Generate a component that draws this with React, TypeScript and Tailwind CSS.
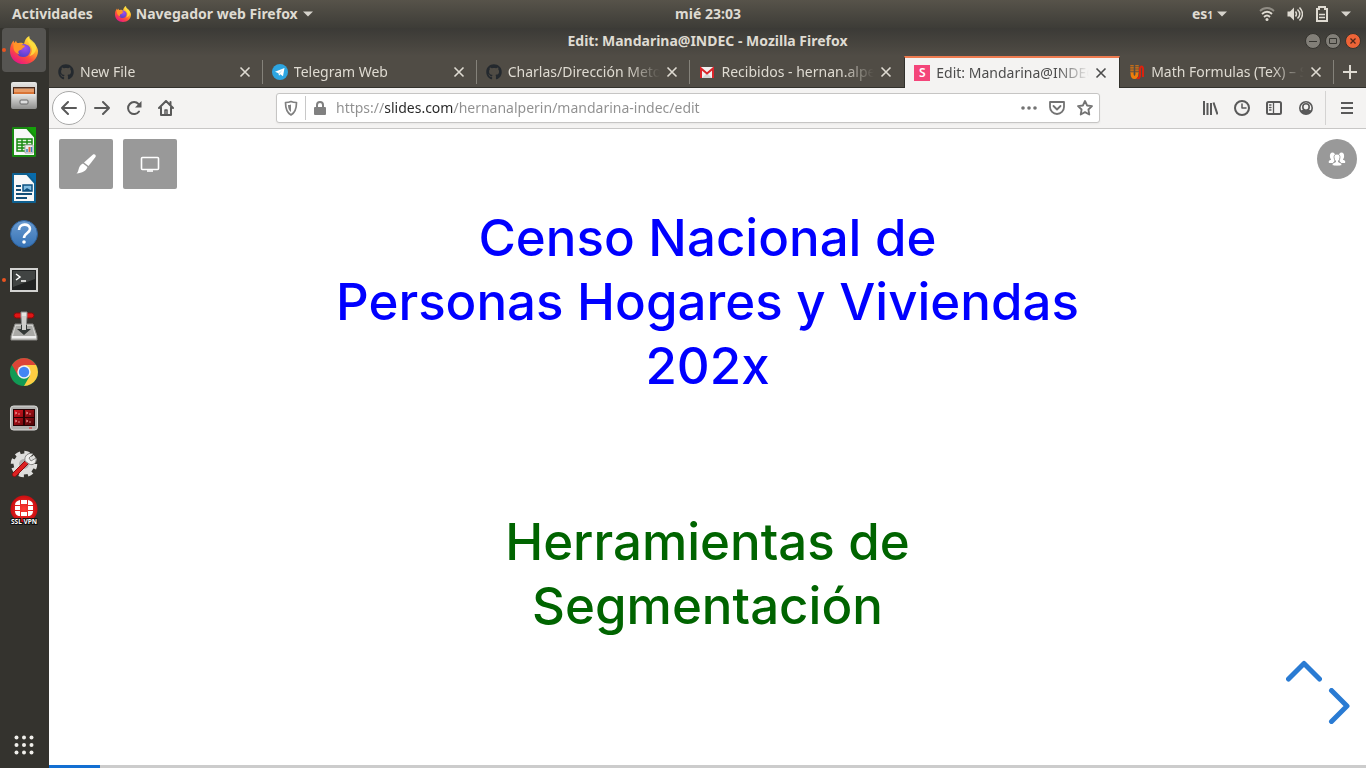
import type { ReactNode } from "react";
import { FaGithub } from "react-icons/fa";

function FirefoxIcon({ className }: { className: string }) {
  return (
    <svg viewBox="0 0 32 32" className={className} aria-hidden="true">
      <defs>
        <linearGradient id="fx-body" x1="0.85" y1="0.05" x2="0.25" y2="1">
          <stop offset="0" stopColor="#fff44f" />
          <stop offset="0.35" stopColor="#ffb028" />
          <stop offset="0.65" stopColor="#ff4f3a" />
          <stop offset="1" stopColor="#e3118d" />
        </linearGradient>
        <radialGradient id="fx-globe" cx="0.6" cy="0.3" r="0.8">
          <stop offset="0" stopColor="#a04df0" />
          <stop offset="1" stopColor="#4a3fc4" />
        </radialGradient>
      </defs>
      <path d="M0 17C0 12 1 9 4 5l1 3 2-3c0 2 1 3 3 3 3-1 5 0 6 1 1-4 2-7 6-9 0 4 2 6 5 8 3 3 5 6 5 9 0 9-7 15-16 15S0 26 0 17Z" fill="url(#fx-body)" />
      <path d="M10 13c2-3 6-5 9-3 4 1 5 5 4 8-1 4-4 6-8 6-5 0-8-4-7-8l7-1Z" fill="url(#fx-globe)" />
      <path d="M4 8c3 0 7 0 9 2 2 1 4 0 4 2l-5 4c-3 1-3 3-1 5-4-1-7-4-7-8Z" fill="#ff9528" />
      <path d="M21 2c-2 5 2 7 3 10 2 4 1 8-2 11 6-2 8-6 8-10 0-5-5-8-9-11Z" fill="#ffe240" opacity="0.8" />
    </svg>
  );
}

function FilesIcon() {
  return (
    <svg viewBox="0 0 28 28" className="size-7">
      <defs>
        <linearGradient id="files-g" x1="0" y1="0" x2="0" y2="1">
          <stop offset="0" stopColor="#e8e8e6" />
          <stop offset="1" stopColor="#8e8e8c" />
        </linearGradient>
      </defs>
      <rect x="1" y="0" width="26" height="27" rx="2" fill="url(#files-g)" />
      <rect x="3" y="5" width="22" height="7" fill="#4c2b1c" />
      <path d="M4 7h20v5H4z" fill="#d97436" />
      <path d="M4 7h20M4 9h20" stroke="#f6c59a" />
      <path d="M2 12h24v13a2 2 0 0 1-2 2H4a2 2 0 0 1-2-2Z" fill="url(#files-g)" />
      <rect x="10" y="18" width="8" height="4" rx="1" fill="#ddd" stroke="#666" />
    </svg>
  );
}

function SheetIcon({ color, light, children }: { color: string; light: string; children: ReactNode }) {
  return (
    <svg viewBox="0 0 28 30" className="h-[30px] w-7">
      <path d="M3 1h14l8 9v19H3z" fill="#f8f8f8" stroke={color} strokeWidth="2" strokeLinejoin="round" />
      <path d="M17 0h9v10z" fill={light} />
      {children}
    </svg>
  );
}

function CalcIcon() {
  return (
    <SheetIcon color="#188a10" light="#15a00a">
      <path d="M7 12h15v12H7z" fill="#e5f5e0" stroke="#188a10" strokeWidth="1.5" />
      <path d="M7 15h15M7 18h15M7 21h15M12 12v12M17 12v12" stroke="#188a10" strokeWidth="1.4" />
      <path d="M15 18h8v8h-8z" fill="#eee" stroke="#aaa" />
      <path d="M17 22v3M21.5 20v5" stroke="#3782c4" strokeWidth="1.5" />
      <path d="M19.500 20v5" stroke="#e2673a" strokeWidth="2" />
    </SheetIcon>
  );
}

function WriterIcon() {
  return (
    <SheetIcon color="#0e6090" light="#086bab">
      <path d="M6 13h5M6 17h5M6 21h16M6 25h11" stroke="#134f78" strokeWidth="2" />
      <path d="M13 12h9v6h-9z" fill="#82bce0" stroke="#0e5180" strokeWidth="1.5" />
      <path d="m13 18 4-3 5 3Z" fill="#0e5180" />
    </SheetIcon>
  );
}

function HelpIcon() {
  return (
    <svg viewBox="0 0 28 28" className="size-7">
      <defs>
        <linearGradient id="help-g" x1="0" y1="0" x2="0" y2="1">
          <stop offset="0" stopColor="#6a9bd0" />
          <stop offset="1" stopColor="#3572b5" />
        </linearGradient>
      </defs>
      <circle cx="14" cy="14" r="13.5" fill="url(#help-g)" stroke="#2d609a" />
      <path d="M9 10c0-7 11-7 11-1 0 4-6 4-6 9" fill="none" stroke="#fff" strokeWidth="2.6" />
      <circle cx="14" cy="22" r="1.8" fill="#fff" />
    </svg>
  );
}

function TerminalIcon() {
  return (
    <svg viewBox="0 0 28 24" className="h-6 w-7">
      <rect x="1" y="1" width="26" height="22" fill="#202222" stroke="#d3d3d1" strokeWidth="2" />
      <path d="M3 3h22v8L3 19Z" fill="#414443" />
      <path d="m6 6 4 3-4 3M11 13h5" fill="none" stroke="#fff" strokeWidth="1.5" />
    </svg>
  );
}

function TransmissionIcon() {
  return (
    <svg viewBox="0 0 28 30" className="h-[30px] w-7">
      <path d="M5 13h18l4 12v4H1v-4Z" fill="#cfcfcc" stroke="#858582" />
      <path d="M6 15h16l3 10H3Z" fill="#a9a9a6" />
      <rect x="4" y="2" width="20" height="5" rx="2.5" fill="#df1515" stroke="#8b0909" />
      <path d="M11 1h6v4l-1 13h-4L11 5Z" fill="#e5e5e2" stroke="#888" />
      <path d="M7 18h4v-4h6v4h4l-7 6Z" fill="#333836" />
      <path d="M12 5h4v14h-4z" fill="#cfcfcc" />
      <path d="M2 26h24" stroke="#eee" strokeWidth="2" />
    </svg>
  );
}

function ChromeIcon() {
  return (
    <svg viewBox="0 0 28 28" className="size-7">
      <circle cx="14" cy="14" r="14" fill="#119a55" />
      <path d="M14 14 1.900 7A14 14 0 0 1 26.100 7Z" fill="#dc4437" />
      <path d="M14 7h12.100A14 14 0 0 1 14 28l6-10.500Z" fill="#ffcd42" />
      <path d="M2 7l6 10.500L14 7Z" fill="#dc4437" />
      <circle cx="14" cy="14" r="6.700" fill="#f3f3f1" />
      <circle cx="14" cy="14" r="5.200" fill="#4285f4" />
    </svg>
  );
}

function TerminatorIcon() {
  return (
    <svg viewBox="0 0 28 26" className="h-[26px] w-7">
      <defs>
        <linearGradient id="term-g" x1="0" y1="0" x2="1" y2="1">
          <stop offset="0" stopColor="#d8141e" />
          <stop offset="1" stopColor="#4d0508" />
        </linearGradient>
      </defs>
      <rect x="0.500" y="1" width="27" height="24" rx="3" fill="#b0b0ae" stroke="#dcdcda" />
      <rect x="3" y="4" width="22" height="17" fill="#260305" />
      <path d="M4 5h9v7H4zM15 5h9v7h-9zM4 13h9v7H4zM15 13h9v7h-9z" fill="url(#term-g)" />
      <path d="m5 7 2 1-2 1m3 0h2m6-2 2 1-2 1m3 0h2M5 15l2 1-2 1m3 0h2m6-2 2 1-2 1m3 0h2" fill="none" stroke="#f3a1a1" strokeWidth="0.800" />
      <path d="M19 23h3" stroke="#dc2020" />
    </svg>
  );
}

function SettingsToolIcon() {
  return (
    <svg viewBox="0 0 28 28" className="size-7">
      <circle cx="14" cy="14" r="10.500" fill="#dededc" />
      <circle cx="14" cy="14" r="11.500" fill="none" stroke="#dededc" strokeWidth="3.500" strokeDasharray="5 4.030" />
      <circle cx="14" cy="14" r="5" fill="#b0b0ae" />
      <path d="M3 23 16 10l3 3L6 26c-2 2-5-1-3-3Z" fill="#dc2222" stroke="#8c0c0c" />
      <path d="M15 11c-1-5 3-9 8-7l-4 4 2 3 5-3c1 5-3 8-7 6Z" fill="#eeeeec" stroke="#858583" />
    </svg>
  );
}

function VpnIcon() {
  return (
    <svg viewBox="0 0 28 30" className="h-[30px] w-7">
      <defs>
        <radialGradient id="vpn-g">
          <stop offset="0" stopColor="#ff3d36" />
          <stop offset="1" stopColor="#c90d10" />
        </radialGradient>
      </defs>
      <circle cx="14" cy="14" r="13.500" fill="url(#vpn-g)" />
      <path d="M11 5h6v4h-6zM5 11h5v4H5zM18 11h5v4h-5zM11 17h6v4h-6zM5 10c0-3 2-4 5-5v5ZM18 5c3 1 5 2 5 5h-5ZM5 16h5v5c-3 0-5-2-5-5ZM18 16h5c0 3-2 5-5 5Z" fill="#fff" />
      <text x="14" y="29" textAnchor="middle" fontFamily="Noto Sans, sans-serif" fontWeight="700" fontSize="6.500" fill="#fff" stroke="#111" strokeWidth="2" paintOrder="stroke">
        SSL VPN
      </text>
    </svg>
  );
}

const launchers: { name: string; running?: boolean; active?: boolean; icon: ReactNode }[] = [
  { name: "Firefox", running: true, active: true, icon: <FirefoxIcon className="size-7" /> },
  { name: "Archivos", icon: <FilesIcon /> },
  { name: "Calc", icon: <CalcIcon /> },
  { name: "Writer", icon: <WriterIcon /> },
  { name: "Ayuda", icon: <HelpIcon /> },
  { name: "Terminal", running: true, icon: <TerminalIcon /> },
  { name: "Transmission", icon: <TransmissionIcon /> },
  { name: "Chrome", icon: <ChromeIcon /> },
  { name: "Terminator", icon: <TerminatorIcon /> },
  { name: "Herramientas", icon: <SettingsToolIcon /> },
  { name: "SSL VPN", icon: <VpnIcon /> },
];

function Caret() {
  return (
    <svg viewBox="0 0 10 6" className="h-[6px] w-[10px]" aria-hidden="true">
      <path d="M0 0.500h10L5 5.500Z" fill="#d6d3cc" />
    </svg>
  );
}

function TopBar() {
  return (
    <header className="grid h-7 grid-cols-[1fr_auto_1fr] items-center bg-linear-to-b from-[#57534a] to-[#3d3c37] text-[14px] leading-5 font-bold text-[#dfdbd2]">
      <div className="flex items-center gap-[22px] pl-3">
        <button type="button">Actividades</button>
        <button type="button" className="flex items-center gap-[5px]">
          <FirefoxIcon className="size-4" />
          Navegador web Firefox
          <Caret />
        </button>
      </div>
      <button type="button" className="ml-[50px]">mié 23:03</button>
      <div className="flex items-center justify-end pr-[15px]">
        <button type="button" className="mr-8 flex items-center gap-1">
          <span>es<span className="text-[10px]">1</span></span>
          <Caret />
        </button>
        <button type="button" aria-label="Sistema" className="flex items-center gap-3">
          <svg viewBox="0 0 16 16" className="size-4" fill="none" stroke="#dfdbd2" strokeWidth="1.800">
            <path d="M1 5c4-4 10-4 14 0" opacity="0.450" />
            <path d="M3 8c3-3 7-3 10 0M5 11c2-2 4-2 6 0" />
            <circle cx="8" cy="13.500" r="1.500" fill="#dfdbd2" stroke="none" />
          </svg>
          <svg viewBox="0 0 16 16" className="size-4" fill="none" stroke="#dfdbd2" strokeWidth="1.500">
            <path d="M0.500 5.500H3l4-4v13l-4-4H0.500Z" fill="#dfdbd2" stroke="none" />
            <path d="M8.500 5.500c1.500 2 1.500 3 0 5M10.500 3.500c3 3 3 6 0 9M12.500 1.500c4 4 4 9 0 13" />
          </svg>
          <svg viewBox="0 0 14 18" className="h-[18px] w-[14px]" fill="none" stroke="#dfdbd2" strokeWidth="2">
            <path d="M2 4h2V2h6v2h2v12H2Z" />
            <path d="M4 9.500h6M4 12.500h6" strokeWidth="1.300" />
          </svg>
          <Caret />
        </button>
      </div>
    </header>
  );
}

function Dock() {
  return (
    <nav aria-label="Aplicaciones" className="flex w-[49px] shrink-0 flex-col items-start bg-[#34332e] pb-[1px] pl-[2px]">
      <ul className="flex flex-col gap-[2px]">
        {launchers.map((app) => (
          <li key={app.name}>
            <button
              type="button"
              aria-label={app.name}
              className={`relative flex size-11 items-center justify-center rounded-[4px] ${app.active ? "bg-[#565552]" : ""}`}
            >
              {app.running && <span className="absolute top-5 left-0 size-1 rounded-full bg-[#e95420]" />}
              {app.icon}
            </button>
          </li>
        ))}
      </ul>
      <button type="button" aria-label="Mostrar aplicaciones" className="mt-auto flex size-11 items-center justify-center">
        <svg viewBox="0 0 20 20" className="size-5" fill="#f0efeb">
          {[2.5, 10, 17.5].map((y) => [2.5, 10, 17.5].map((x) => <circle key={`${x}-${y}`} cx={x} cy={y} r="2" />))}
        </svg>
      </button>
    </nav>
  );
}

const tabs: { title: string; active?: boolean; divider?: boolean; icon: ReactNode }[] = [
  { title: "New File", divider: true, icon: <FaGithub className="size-4 text-[#24292e]" /> },
  {
    title: "Telegram Web",
    divider: true,
    icon: (
      <svg viewBox="0 0 16 16" className="size-4">
        <circle cx="8" cy="8" r="8" fill="#2da5e1" />
        <path d="M3 7.800 12.500 4 11 12.200 8.300 10.300 7 11.700 6.500 9.200Z" fill="#fff" />
        <path d="m6.500 9.200 4.500-4L7.500 10Z" fill="#bcdff2" />
      </svg>
    ),
  },
  { title: "Charlas/Dirección Meto", divider: true, icon: <FaGithub className="size-4 text-[#24292e]" /> },
  {
    title: "Recibidos - hernan.alpe",
    icon: (
      <svg viewBox="0 0 16 16" className="size-4">
        <path d="M1 3h14v11H1z" fill="#f1f1f1" />
        <path d="m3 14 5-5 5 5Z" fill="#d5d5d5" />
        <path d="M2 14V4.500l6 5 6-5V14" fill="none" stroke="#d9252a" strokeWidth="2" />
      </svg>
    ),
  },
  {
    title: "Edit: Mandarina@INDEC",
    active: true,
    icon: (
      <span className="flex size-4 items-center justify-center bg-[#f4457a] text-[12px] leading-4 font-semibold text-white">S</span>
    ),
  },
  {
    title: "Math Formulas (TeX) – S",
    divider: true,
    icon: (
      <svg viewBox="0 0 16 16" className="size-4" fill="none">
        <path d="M3 1v8c0 6 5 6 5 0V1" stroke="#ef7d0a" strokeWidth="3" />
        <path d="M1 2.500h9M1 5h9M1 7.500h9M3 1v8M8 1v8" stroke="#504c45" strokeWidth="0.600" />
        <path d="M8 14c4 1 3-4 3-8 0-5 3-4 3-1v8" stroke="#d9230f" strokeWidth="2" />
      </svg>
    ),
  },
];

function TabStrip() {
  return (
    <div className="flex h-8 bg-[#504c45]">
      <div role="tablist" className="flex min-w-0 flex-1">
        {tabs.map((tab) => (
          <div
            key={tab.title}
            className={`relative flex min-w-0 flex-1 items-center gap-[6px] pr-3 ${
              tab.active
                ? "border-t-2 border-r border-l border-t-[#ee7b50] border-r-[#32312c] border-l-[#32312c] bg-[#f4f3f2] pl-[9px] text-[#4c4c4c]"
                : "border-b border-[#32312c] pl-[9px] text-[#dfdbd2]"
            }`}
          >
            <span className="shrink-0">{tab.icon}</span>
            <button
              type="button"
              role="tab"
              aria-selected={!!tab.active}
              className="min-w-0 flex-1 overflow-hidden mask-[linear-gradient(to_right,black_calc(100%-32px),transparent)] text-left text-[14px] leading-5 whitespace-nowrap"
            >
              {tab.title}
            </button>
            <button type="button" aria-label="Cerrar pestaña" className="shrink-0">
              <svg viewBox="0 0 12 12" className="size-3" fill="none" stroke="currentColor" strokeWidth="1.600">
                <path d="m1.500 1.500 9 9M10.500 1.500l-9 9" />
              </svg>
            </button>
            {tab.divider && <span className="absolute top-1 right-0 h-6 w-px bg-[#85827a]" />}
          </div>
        ))}
      </div>
      <button type="button" aria-label="Pestaña nueva" className="flex w-8 items-center justify-center border-b border-[#32312c] text-[#dfdbd2]">
        <svg viewBox="0 0 14 14" className="size-[14px]" stroke="currentColor" strokeWidth="2">
          <path d="M7 0v14M0 7h14" />
        </svg>
      </button>
    </div>
  );
}

function ToolButton({ label, children }: { label: string; children: ReactNode }) {
  return (
    <button type="button" aria-label={label} className="flex size-8 shrink-0 items-center justify-center">
      <svg viewBox="0 0 16 16" className="size-4" fill="none" stroke="#595959" strokeWidth="2" strokeLinecap="round" strokeLinejoin="round">
        {children}
      </svg>
    </button>
  );
}

function Toolbar() {
  return (
    <div className="flex h-[41px] items-center border-b border-[#c8c7c6] bg-[#f4f3f2] px-[3px]">
      <button type="button" aria-label="Atrás" className="flex size-[34px] shrink-0 items-center justify-center rounded-full border border-[#a9a9a8] bg-white">
        <svg viewBox="0 0 16 16" className="size-4" fill="none" stroke="#595959" strokeWidth="2" strokeLinecap="round" strokeLinejoin="round">
          <path d="M15 8H1M7 2 1 8l6 6" />
        </svg>
      </button>
      <ToolButton label="Adelante"><path d="M1 8h14M9 2l6 6-6 6" /></ToolButton>
      <ToolButton label="Recargar">
        <path d="M13 11.500A6 6 0 1 1 12.500 4" />
        <path d="M15.500 1v6.500H9Z" fill="#595959" stroke="none" />
      </ToolButton>
      <ToolButton label="Inicio">
        <path d="M1 8 8 1l7 7M3 7.500V15h10V7.500M12.500 2v3" />
        <path d="M7 14v-4h2v4" strokeWidth="1.500" />
      </ToolButton>
      <div className="w-[94px] shrink" />
      <div className="flex h-[30px] min-w-0 flex-1 items-center rounded-[3px] border border-[#c6c5c4] bg-white pr-[6px] pl-[6px] shadow-xs">
        <svg viewBox="0 0 16 16" className="size-4 shrink-0" fill="none" stroke="#808080" strokeWidth="1.700">
          <path d="M8 1.500c2 1 4 1 5.500 1 0 6-1 10-5.500 12.500C3.500 12.500 2.500 8.500 2.500 2.500c1.500 0 3.500 0 5.500-1Z" strokeLinejoin="round" />
          <path d="M8 4.500v7.500C6 10.500 5 8.500 5 5c1 0 2 0 3-.5Z" fill="#808080" stroke="none" />
        </svg>
        <span className="mx-[6px] h-6 w-px shrink-0 bg-[#c8c8c8]" />
        <svg viewBox="0 0 16 16" className="size-4 shrink-0">
          <path d="M5 7V5a3 3 0 0 1 6 0v2" fill="none" stroke="#808080" strokeWidth="2" />
          <rect x="2" y="7" width="12" height="8" rx="1" fill="#808080" />
        </svg>
        <input
          aria-label="Dirección"
          defaultValue="https://slides.com/hernanalperin/mandarina-indec/edit"
          className="ml-2 min-w-0 flex-1 bg-[linear-gradient(to_right,#8f8f8f_49px,#262626_49px,#262626_118px,#8f8f8f_118px)] bg-clip-text text-[14px] leading-5 text-transparent outline-none"
        />
        <div className="flex shrink-0 items-center gap-3">
          <button type="button" aria-label="Acciones de página">
            <svg viewBox="0 0 16 16" className="size-4" fill="#737373">
              <circle cx="2" cy="8" r="1.800" /><circle cx="8" cy="8" r="1.800" /><circle cx="14" cy="8" r="1.800" />
            </svg>
          </button>
          <button type="button" aria-label="Guardar en Pocket">
            <svg viewBox="0 0 16 16" className="size-4" fill="none" stroke="#737373" strokeWidth="1.800" strokeLinecap="round" strokeLinejoin="round">
              <path d="M1 2h14v5a7 7 0 0 1-14 0ZM4.500 6 8 9.500 11.500 6" />
            </svg>
          </button>
          <button type="button" aria-label="Marcador">
            <svg viewBox="0 0 16 16" className="size-4" fill="none" stroke="#737373" strokeWidth="1.800" strokeLinejoin="round">
              <path d="m8 1 2.100 4.500 4.900.6-3.600 3.400.9 5L8 12.100l-4.300 2.400.9-5L1 6.100l4.900-.6Z" />
            </svg>
          </button>
        </div>
      </div>
      <div className="w-[94px] shrink" />
      <ToolButton label="Biblioteca"><path d="M2 1v14M5.500 3v12M9 3v12M11.500 2.500 15.500 14.500" strokeLinecap="butt" /></ToolButton>
      <ToolButton label="Historial"><circle cx="8" cy="8" r="7" /><path d="M8 4v4h4" strokeWidth="1.500" /></ToolButton>
      <ToolButton label="Barra lateral">
        <rect x="1" y="2" width="14" height="12" rx="1.500" />
        <path d="M7.500 2v12M3.500 5H5M3.500 7.500H5M3.500 10H5" strokeWidth="1.300" />
      </ToolButton>
      <ToolButton label="Cuenta">
        <circle cx="8" cy="8" r="6.200" strokeWidth="1.600" />
        <path d="M2.500 10.500c2.500-1.500 8.500-1.500 11 0-1.500 5-9.500 5-11 0Z" fill="#595959" stroke="none" />
        <circle cx="8" cy="7" r="3.200" strokeWidth="1.600" fill="#f4f3f2" />
      </ToolButton>
      <span className="mr-[5px] ml-[3px] h-[34px] w-px shrink-0 bg-[#d4d3d2]" />
      <ToolButton label="Menú"><path d="M2 3h12M2 8h12M2 13h12" strokeLinecap="butt" /></ToolButton>
    </div>
  );
}

function Slide() {
  return (
    <main className="flex flex-1 flex-col bg-white">
      <div className="flex items-start gap-[10px] px-[10px] pt-[10px]">
        <button type="button" aria-label="Estilo" className="flex h-[50px] w-[54px] items-center justify-center rounded-[2px] bg-[#999]">
          <svg viewBox="0 0 20 20" className="size-5" fill="#fff">
            <path d="M17 0.500c2-1 3.500 1 2.300 2.700L12.500 12 8 8.500Z" />
            <path d="m7 9.500 4.500 3.500c-1.500 4-5 6-11 6.500 2-2 1.500-3 2.500-5.500.8-2 2-3.700 4-4.500Z" />
          </svg>
        </button>
        <button type="button" aria-label="Presentar" className="flex h-[50px] w-[54px] items-center justify-center rounded-[2px] bg-[#999]">
          <svg viewBox="0 0 20 16" className="h-4 w-5" fill="none" stroke="#fff" strokeWidth="1.600">
            <rect x="1.500" y="1.500" width="17" height="12" rx="1" />
            <path d="M7 15h6" />
          </svg>
        </button>
        <button type="button" aria-label="Colaboradores" className="-mr-px ml-auto flex size-10 items-center justify-center rounded-full bg-[#999]">
          <svg viewBox="0 0 18 14" className="h-[14px] w-[18px]" fill="#fff">
            <ellipse cx="4.500" cy="4" rx="2.600" ry="3.500" />
            <ellipse cx="13.500" cy="4" rx="2.600" ry="3.500" />
            <path d="M3 6.500h3.500V9L5 11H1c-.8-1.500 0-2.500 2-3.200ZM15 6.500h-3.500V9l1.500 2h4c.8-1.500 0-2.500-2-3.200Z" />
            <path d="M9 2c2.300 0 3.200 1.800 2.900 3.800-.1 1.500-.7 2.600-1.400 3.200v1c2.200.8 3.500 1 3.500 3.500-3 .8-7 .8-10 0C4 11 5.300 10.800 7.500 10V9c-.7-.6-1.300-1.700-1.400-3.200C5.800 3.800 6.700 2 9 2Z" stroke="#999" strokeWidth="0.900" />
          </svg>
        </button>
      </div>
      <h1 className="mt-[17px] text-center font-[Inter,sans-serif] text-[51px] leading-16 font-medium text-[#0000ff]">
        Censo Nacional de
        <br />
        Personas Hogares y Viviendas
        <br />
        202x
      </h1>
      <h2 className="mt-28 text-center font-[Inter,sans-serif] text-[51px] leading-16 font-medium text-[#006400]">
        Herramientas de
        <br />
        Segmentación
      </h2>
      <div className="mt-auto mr-4 mb-[39px] flex self-end">
        <button type="button" aria-label="Arriba" className="mb-11 h-[22px] w-[36px] self-start">
          <svg viewBox="0 0 36 22" className="h-[22px] w-[36px]" fill="none" stroke="#2a7bd3" strokeWidth="5" strokeLinecap="round" strokeLinejoin="round">
            <path d="m2.500 19 15.500-15.500L33.500 19" />
          </svg>
        </button>
        <button type="button" aria-label="Siguiente" className="mt-7 ml-[6px] h-[36px] w-[22px]">
          <svg viewBox="0 0 22 36" className="h-[36px] w-[22px]" fill="none" stroke="#2a7bd3" strokeWidth="5" strokeLinecap="round" strokeLinejoin="round">
            <path d="m3.500 2.500 15.500 15.500L3.500 33.500" />
          </svg>
        </button>
      </div>
      <div className="h-[3px] bg-[#ccc]">
        <div className="h-full w-[51px] bg-[#136fd2]" />
      </div>
    </main>
  );
}

function TitleBar() {
  const round = "flex size-4 items-center justify-center rounded-full border border-[#35342f]";
  return (
    <div className="grid h-7 grid-cols-[1fr_auto_1fr] items-center bg-linear-to-b from-[#3b3a36] to-[#504c45]">
      <p className="col-start-2 pb-[2px] text-[14px] leading-5 font-bold text-[#dfdbd2]">Edit: Mandarina@INDEC - Mozilla Firefox</p>
      <div className="mr-[5px] flex gap-1 justify-self-end pb-[2px]">
        <button type="button" aria-label="Minimizar" className={`${round} bg-[#827f78]`}>
          <svg viewBox="0 0 10 10" className="size-[10px]" stroke="#373631"><path d="M1 5.500h8" /></svg>
        </button>
        <button type="button" aria-label="Maximizar" className={`${round} bg-[#827f78]`}>
          <svg viewBox="0 0 10 10" className="size-[10px]" fill="none" stroke="#373631"><path d="M1.500 2.500h7v5h-7z" /></svg>
        </button>
        <button type="button" aria-label="Cerrar" className={`${round} bg-[#ee6437]`}>
          <svg viewBox="0 0 10 10" className="size-[10px]" stroke="#50271a" strokeWidth="1.300"><path d="m2.500 2.500 5 5M7.500 2.500l-5 5" /></svg>
        </button>
      </div>
    </div>
  );
}

export default function App() {
  return (
    <div className="flex min-h-screen flex-col font-['Noto_Sans',sans-serif]">
      <TopBar />
      <div className="flex flex-1">
        <Dock />
        <div className="flex min-w-0 flex-1 flex-col">
          <TitleBar />
          <TabStrip />
          <Toolbar />
          <Slide />
        </div>
      </div>
    </div>
  );
}
